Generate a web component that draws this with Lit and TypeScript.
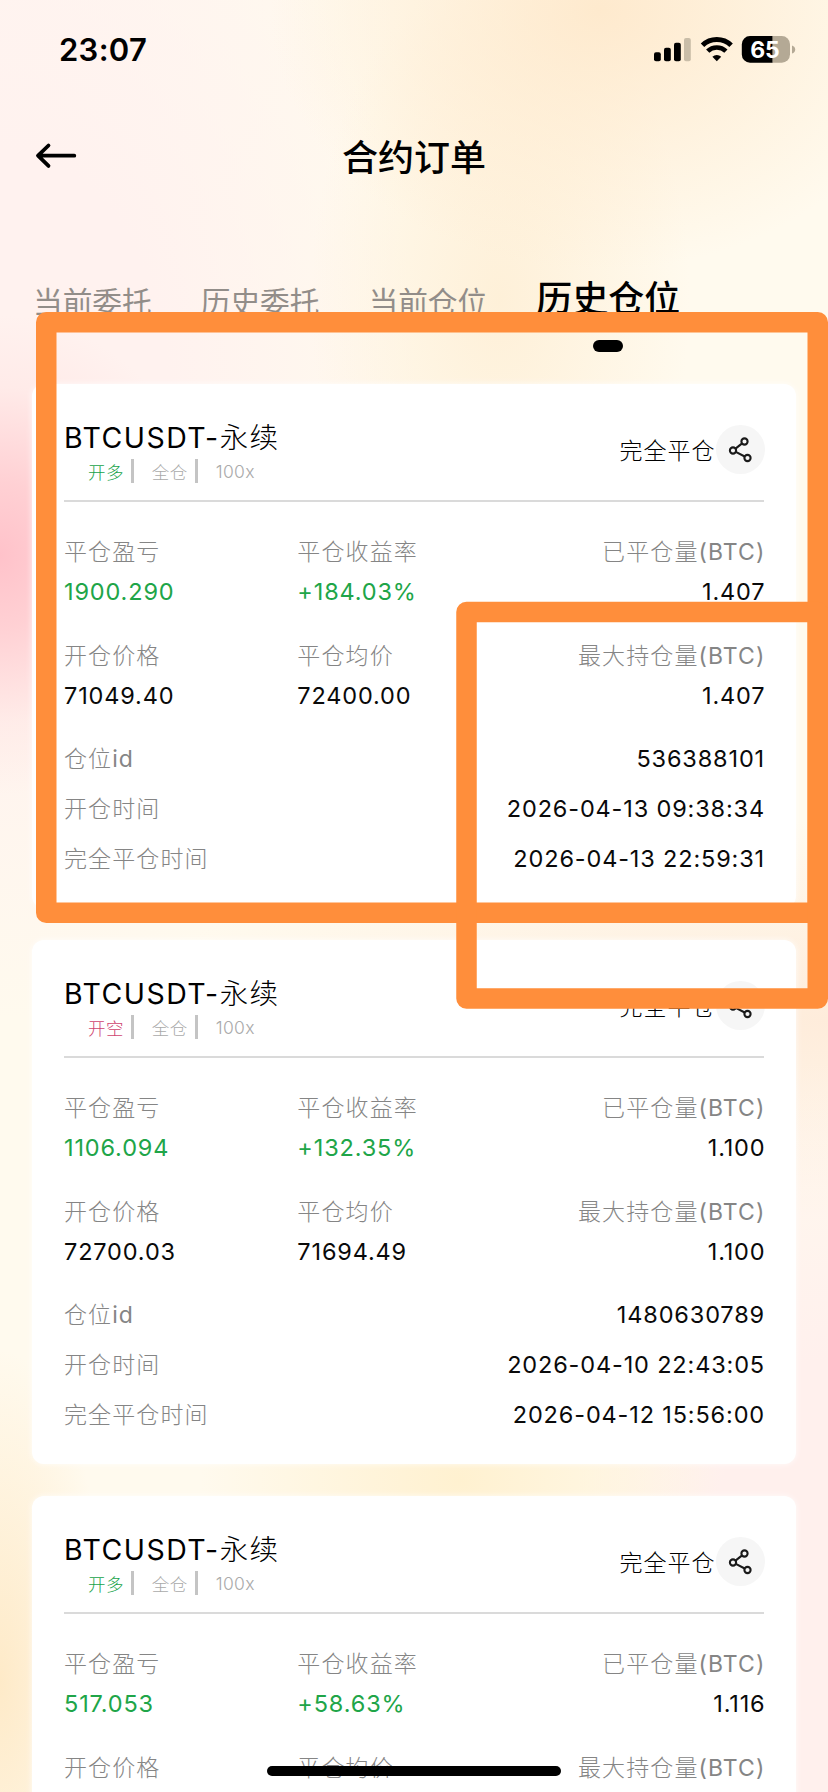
import { LitElement, html, svg, css } from "lit";
import { customElement, property } from "lit/decorators.js";

interface Position {
  side: "long" | "short";
  pnl: string;
  rate: string;
  closed: string;
  open: string;
  avg: string;
  max: string;
  id: string;
  openedAt: string;
  closedAt: string;
}

const POSITIONS: Position[] = [
  { side: "long", pnl: "1900.290", rate: "+184.03%", closed: "1.407", open: "71049.40", avg: "72400.00", max: "1.407", id: "536388101", openedAt: "2026-04-13 09:38:34", closedAt: "2026-04-13 22:59:31" },
  { side: "short", pnl: "1106.094", rate: "+132.35%", closed: "1.100", open: "72700.03", avg: "71694.49", max: "1.100", id: "1480630789", openedAt: "2026-04-10 22:43:05", closedAt: "2026-04-12 15:56:00" },
  { side: "long", pnl: "517.053", rate: "+58.63%", closed: "1.116", open: "", avg: "", max: "", id: "", openedAt: "", closedAt: "" },
];

@customElement("status-bar")
class StatusBar extends LitElement {
  static styles = css`
    :host { display: flex; justify-content: space-between; align-items: center; height: 99px; padding: 0 32px 0 59px; box-sizing: border-box; }
    .time { font-size: 31px; font-weight: 600; letter-spacing: 0.3px; line-height: 40px; }
    svg { display: block; margin-right: -1px; }
    .pct { font: 700 23px Inter, sans-serif; fill: #fff; }
  `;
  render() {
    return html`
      <div class="time">23:07</div>
      <svg width="143" height="27" viewBox="653 36 143 27">
        <rect x="653" y="52.3" width="6.8" height="9" rx="2" />
        <rect x="663" y="47.7" width="6.8" height="13.6" rx="2" />
        <rect x="673" y="42.7" width="6.8" height="18.6" rx="2" />
        <rect x="683" y="38" width="6.8" height="23.3" rx="2" fill="#c9bda8" />
        <g fill="none" stroke="#000">
          <path d="M701.5 45.2a20.6 20.6 0 0 1 28.6 0" stroke-width="5" />
          <path d="M706.7 51.2a13 13 0 0 1 18.2 0" stroke-width="4.6" />
        </g>
        <path d="M715.8 61.2l-4.4-4.5a6.4 6.4 0 0 1 8.8 0z" />
        <path d="M749 36h22.7v26.7H749a8.2 8.2 0 0 1-8.2-8.2V44.2a8.2 8.2 0 0 1 8.2-8.2z" />
        <path d="M771.7 36h9.1a8.2 8.2 0 0 1 8.2 8.2v10.3a8.2 8.2 0 0 1-8.2 8.2h-9.1z" fill="#b4a995" />
        <path d="M791 45.5q3.2 1 3.2 4t-3.2 4z" fill="#b4a995" />
        <text class="pct" x="764" y="57.600" text-anchor="middle">65</text>
      </svg>
    `;
  }
}

@customElement("position-card")
class PositionCard extends LitElement {
  @property({ attribute: false }) data!: Position;
  static styles = css`
    :host { display: block; height: 524px; box-sizing: border-box; flex: none; padding: 32px; background: #fff; border-radius: 12px; box-shadow: 0 0 6px rgba(255, 255, 255, 0.8); font-size: 23px; letter-spacing: 1.1px; }
    .head { display: flex; justify-content: space-between; height: 84px; border-bottom: 2px solid #dadada; }
    .pair { font-size: 28.5px; line-height: 40px; padding-top: 2px; letter-spacing: 1.45px; white-space: nowrap; }
    .cn { font-weight: 300; }
    .tags { display: flex; align-items: center; height: 26px; padding-left: 24px; font-size: 17.5px; letter-spacing: 0.4px; font-weight: 300; color: #aaa; }
    .tag { display: flex; align-items: center; margin-right: 17.5px; }
    .tag::after { content: ""; width: 3px; height: 24px; margin-left: 7.5px; background: #c4c4c4; }
    .tag:last-child::after { display: none; }
    .long { color: #17a34a; }
    .short { color: #cf4470; }
    .state { display: flex; align-items: center; height: 66px; letter-spacing: 1px; }
    .share { width: 49px; height: 49px; margin-right: -0.5px; border-radius: 50%; background: #f6f6f6; }
    .grid { display: grid; grid-template-columns: 1fr 1fr 1fr; row-gap: 24px; padding-top: 30px; }
    .cell { display: flex; flex-direction: column; line-height: 40px; white-space: nowrap; }
    .cell:nth-child(3n) { align-items: flex-end; margin-right: -1.5px; }
    .label { color: #858585; }
    .label .cn { letter-spacing: 1.1px; }
    .value { color: #0a0a0a; min-height: 40px; font-size: 23.5px; letter-spacing: 0.85px; }
    .up { color: #20a548; }
    .rows { padding-top: 18px; }
    .row { display: flex; justify-content: space-between; line-height: 50px; }
    .end { margin-right: -1px; }
  `;
  private cell(cn: string, latin: string, value: string, up = false) {
    return html`<div class="cell"><span class="label"><span class="cn">${cn}</span>${latin}</span><span class="value ${up ? "up" : ""}">${value}</span></div>`;
  }
  private row(cn: string, latin: string, value: string) {
    return html`<div class="row"><span class="label"><span class="cn">${cn}</span>${latin}</span><span class="value end">${value}</span></div>`;
  }
  render() {
    const d = this.data;
    return html`
      <div class="head">
        <div>
          <div class="pair">BTCUSDT-<span class="cn">永续</span></div>
          <div class="tags">
            <span class="tag"><span class="${d.side}">${d.side === "long" ? "开多" : "开空"}</span></span>
            <span class="tag">全仓</span>
            <span class="tag">100x</span>
          </div>
        </div>
        <div class="state">
          <span class="cn">完全平仓</span>
          <svg class="share" viewBox="714.5 425 49 49" fill="none" stroke="#1a1a1a" stroke-width="2.1">
            <circle cx="743" cy="441.5" r="3.1" />
            <circle cx="731.5" cy="450.5" r="3.1" />
            <circle cx="746" cy="458" r="3.1" />
            <path d="M734 448.6l6.6-5.2M734.3 451.9l8.9 4.6" />
          </svg>
        </div>
      </div>
      <div class="grid">
        ${this.cell("平仓盈亏", "", d.pnl, true)} ${this.cell("平仓收益率", "", d.rate, true)} ${this.cell("已平仓量", "(BTC)", d.closed)}
        ${this.cell("开仓价格", "", d.open)} ${this.cell("平仓均价", "", d.avg)} ${this.cell("最大持仓量", "(BTC)", d.max)}
      </div>
      ${d.id
        ? html`<div class="rows">
            ${this.row("仓位", "id", d.id)} ${this.row("开仓时间", "", d.openedAt)} ${this.row("完全平仓时间", "", d.closedAt)}
          </div>`
        : ""}
    `;
  }
}

@customElement("app-root")
class AppRoot extends LitElement {
  static styles = css`
    :host { display: block; position: relative; height: 1792px; overflow: hidden; font-family: Inter, "Noto Sans CJK SC", sans-serif; color: #000;
      background:
        radial-gradient(ellipse 210px 240px at 0 555px, rgba(255, 194, 202, 1), rgba(255, 200, 205, 0.8) 30%, rgba(255, 218, 218, 0.3) 70%, rgba(255, 228, 226, 0) 100%),
        radial-gradient(ellipse 330px 260px at 600px 10px, rgba(254, 232, 202, 0.9), rgba(254, 234, 205, 0) 100%),
        radial-gradient(ellipse 190px 330px at 500px 300px, rgba(254, 239, 214, 0.9), rgba(254, 238, 212, 0) 100%),
        radial-gradient(ellipse 420px 620px at 0 400px, rgba(255, 242, 239, 1) 40%, rgba(255, 244, 240, 0) 100%),
        radial-gradient(ellipse 400px 400px at 0 0, rgba(255, 245, 241, 0.9), rgba(255, 246, 241, 0) 100%),
        radial-gradient(ellipse 110px 330px at 0 1680px, rgba(254, 234, 200, 1), rgba(254, 236, 205, 0) 100%),
        radial-gradient(ellipse 260px 200px at 460px 1480px, rgba(255, 241, 208, 1), rgba(255, 240, 204, 0) 100%),
        radial-gradient(ellipse 260px 600px at 828px 1660px, rgba(255, 240, 237, 1) 50%, rgba(255, 241, 237, 0) 100%),
        radial-gradient(ellipse 700px 200px at 828px 1020px, rgba(254, 236, 219, 1), rgba(254, 236, 220, 0) 100%),
        #fffaee;
    }
    .bar { display: flex; align-items: center; justify-content: center; position: relative; height: 112px; margin-bottom: 2px; font-size: 36px; font-weight: 500; }
    .back { position: absolute; left: 34px; top: 42px; }
    .tabs { display: flex; align-items: flex-start; padding: 58px 0 0 33px; gap: 49px; height: 69px; white-space: nowrap; }
    .tab { font-size: 29.7px; line-height: 40px; padding-top: 11px; color: #928d89; }
    .active { display: flex; flex-direction: column; align-items: center; padding-top: 0; font-size: 36px; font-weight: 500; color: #000; line-height: 56px; }
    .pill { width: 30px; height: 12px; margin-top: 13px; border-radius: 6px; background: #000; }
    .list { display: flex; flex-direction: column; gap: 32px; padding: 44px 32px 0; }
    .marks { position: absolute; left: 0; top: 0; }
    .home { position: absolute; left: 267px; top: 1766px; width: 294px; height: 10px; border-radius: 5px; background: #000; }
  `;
  render() {
    return html`
      <status-bar></status-bar>
      <div class="bar">
        <svg class="back" width="44" height="30" viewBox="34 141 44 30" fill="none" stroke="#000" stroke-width="3.8" stroke-linecap="round" stroke-linejoin="round">
          <path d="M48.5 145.5L38 155.7l10.5 10.2M38.5 155.7H74.3" />
        </svg>
        合约订单
      </div>
      <div class="tabs">
        <span class="tab">当前委托</span>
        <span class="tab">历史委托</span>
        <span class="tab">当前仓位</span>
        <span class="tab active">历史仓位<i class="pill"></i></span>
      </div>
      <div class="list">${POSITIONS.map((p) => html`<position-card .data=${p}></position-card>`)}</div>
      <svg class="marks" width="828" height="1792" fill="none" stroke="#ff8e3b" stroke-width="20.5" stroke-linejoin="round">
        ${svg`<rect x="46.25" y="322.25" width="771.5" height="590.5" /><rect x="466.5" y="612" width="351.25" height="386.5" />`}
      </svg>
      <div class="home"></div>
    `;
  }
}
